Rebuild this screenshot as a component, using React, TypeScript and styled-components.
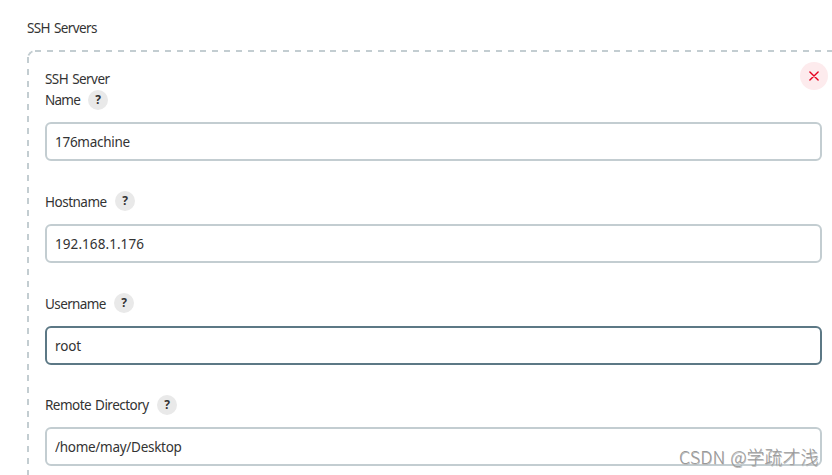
import React from "react";
import styled, { createGlobalStyle } from "styled-components";

const GlobalStyle = createGlobalStyle`
  * { box-sizing: border-box; }
  html, body { margin: 0; background: #fff; overflow: hidden; }
`;

const Page = styled.main`
  position: relative;
  width: 832px;
  height: 475px;
  overflow: hidden;
  background: #fff;
  color: #333;
  font: 400 13.5px/20px "Noto Sans", "Open Sans", sans-serif;
  word-spacing: 1px;
`;

const SectionTitle = styled.div`
  padding: 18px 0 0 27px;
  height: 50px;
  letter-spacing: -0.6px;
`;

const ServerPanel = styled.section`
  position: relative;
  margin-left: 27px;
  width: 824px;
  height: 700px;
  padding: 19px 29px 0 18px;
  background:
    repeating-linear-gradient(90deg, #c3cdd1 0 6px, transparent 6px 11.82px) 7.7px 0 / 816px 2px no-repeat,
    repeating-linear-gradient(180deg, #c3cdd1 0 6px, transparent 6px 11.79px) 0 7.4px / 2px 690px no-repeat;

  &::before {
    content: "";
    position: absolute;
    left: 0;
    top: 0;
    width: 8px;
    height: 8px;
    border: 2px solid #c3cdd1;
    border-right: 0;
    border-bottom: 0;
    border-top-left-radius: 8px;
    clip-path: polygon(0 5px, 5px 0, 6px 3px, 3px 6px);
  }
`;

const PanelTitle = styled.div`
  height: 21px;
  letter-spacing: -0.55px;
`;

const Field = styled.div`
  margin-bottom: 30px;
`;

const LabelRow = styled.div<{ $height: number }>`
  display: flex;
  align-items: flex-start;
  gap: 8px;
  height: ${(p) => p.$height}px;
`;

const Label = styled.label<{ $width: number; $spacing: number; $drop: number }>`
  width: ${(p) => p.$width}px;
  padding-top: ${(p) => p.$drop}px;
  white-space: nowrap;
  letter-spacing: ${(p) => p.$spacing}px;
`;

const Help = styled.button`
  display: grid;
  place-items: center;
  width: 20px;
  height: 20px;
  padding: 0;
  border: 0;
  border-radius: 50%;
  background: #e9e9e9;
  color: #333;
  font: 700 12px/20px "Noto Sans", sans-serif;
`;

const Input = styled.input<{ $active?: boolean; $spacing: number }>`
  display: block;
  width: 777px;
  height: 39px;
  padding: 0 8px;
  border: 2px solid ${(p) => (p.$active ? "#5c7885" : "#c3cdd1")};
  border-radius: 6px;
  outline: 0;
  background: #fff;
  color: #333;
  font: 400 13.5px/20px "Noto Sans", "Open Sans", sans-serif;
  letter-spacing: ${(p) => p.$spacing}px;
`;

const RemoveButton = styled.button`
  position: absolute;
  top: 12px;
  left: 773px;
  display: grid;
  place-items: center;
  width: 28px;
  height: 28px;
  padding: 0;
  border: 0;
  border-radius: 50%;
  background: #fdebed;
  color: #e6001f;
`;

const Watermark = styled.div`
  position: absolute;
  left: 679px;
  top: 444px;
  display: flex;
  gap: 5px;
  color: #999;
  font: 300 18px/24px "Noto Sans CJK SC", sans-serif;
  white-space: nowrap;
  text-shadow: 0.5px 0.5px 0 #bbb;
`;

const fields = [
  { label: "Name", value: "176machine", width: 35, rowHeight: 32, drop: 0, labelSpacing: -0.75, spacing: -0.27 },
  { label: "Hostname", value: "192.168.1.176", width: 62, rowHeight: 33, drop: 1, labelSpacing: -0.5, spacing: 0.07 },
  { label: "Username", value: "root", width: 61, rowHeight: 33, drop: 1, labelSpacing: -0.6, spacing: -0.15 },
  { label: "Remote Directory", value: "/home/may/Desktop", width: 104, rowHeight: 32, drop: 0, labelSpacing: -0.53, spacing: -0.28 },
];

export default function App() {
  return (
    <>
      <GlobalStyle />
      <Page>
        <SectionTitle>SSH Servers</SectionTitle>
        <ServerPanel>
          <PanelTitle>SSH Server</PanelTitle>
          {fields.map((f) => (
            <Field key={f.label}>
              <LabelRow $height={f.rowHeight}>
                <Label $width={f.width} $spacing={f.labelSpacing} $drop={f.drop}>{f.label}</Label>
                <Help aria-label={`Help for ${f.label}`}>?</Help>
              </LabelRow>
              <Input defaultValue={f.value} $active={f.label === "Username"} $spacing={f.spacing} />
            </Field>
          ))}
          <RemoveButton aria-label="Remove server">
            <svg width="10" height="10" viewBox="0 0 10 10" fill="none" stroke="currentColor" strokeWidth="1.4" strokeLinecap="round">
              <path d="M.9.9 9.1 9.1M9.1.9.9 9.1" />
            </svg>
          </RemoveButton>
        </ServerPanel>
        <Watermark>
          <span>CSDN</span>
          <span>@学疏才浅</span>
        </Watermark>
      </Page>
    </>
  );
}
